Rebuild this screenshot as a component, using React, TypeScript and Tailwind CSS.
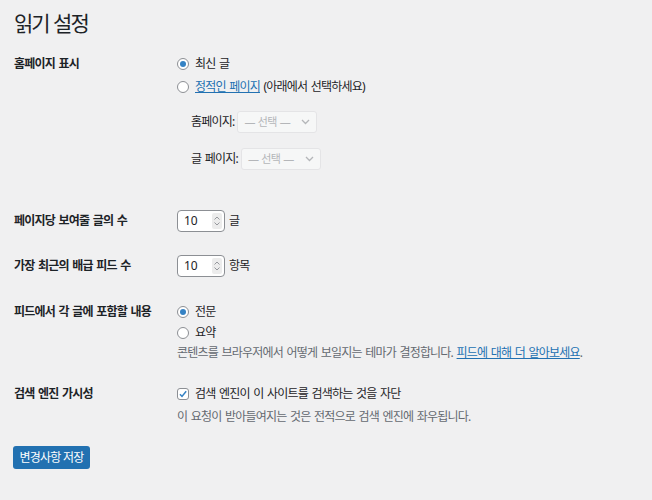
import React from "react";

function Radio({ checked, children }: { checked?: boolean; children: React.ReactNode }) {
  return (
    <label className="flex h-full items-center gap-[6px]">
      <span className="flex h-[12px] w-[12px] shrink-0 items-center justify-center rounded-full border border-[#8c8f94] bg-white">
        {checked && <span className="h-[6px] w-[6px] rounded-full bg-[#3582c4]" />}
      </span>
      <span>{children}</span>
    </label>
  );
}

function Select() {
  return (
    <div className="flex h-[22px] w-[80px] items-center justify-between rounded-[3px] border border-[#e4e4e6] bg-[#f6f7f7] pl-[6px] pr-[6px] text-[11px] text-[#b4b6b9]">
      <span>— 선택 —</span>
      <svg width="9" height="6" viewBox="0 0 9 6" fill="none">
        <path d="M1 1l3.5 3.5L8 1" stroke="#b4b6b9" strokeWidth="1.3" />
      </svg>
    </div>
  );
}

function NumberInput() {
  return (
    <div className="flex h-[22px] w-[48px] items-center justify-between rounded-[4px] border border-[#8c8f94] bg-white pl-[6px] pr-[2px] text-[12px] tracking-normal">
      <span>10</span>
      <span className="flex h-[16px] w-[10px] flex-col items-center justify-center gap-[2px] rounded-[2px] bg-[#ececec]">
        <svg width="6" height="4" viewBox="0 0 6 4" fill="none">
          <path d="M0.5 3.5L3 1l2.5 2.5" stroke="#8c8f94" strokeWidth="0.9" />
        </svg>
        <svg width="6" height="4" viewBox="0 0 6 4" fill="none">
          <path d="M0.5 0.5L3 3l2.5-2.5" stroke="#8c8f94" strokeWidth="0.9" />
        </svg>
      </span>
    </div>
  );
}

export default function App() {
  return (
    <div className="min-h-[500px] w-full bg-[#f0f0f1] font-['Noto_Sans','Noto_Sans_CJK_KR',sans-serif] text-[12px] tracking-[-0.8px] text-[#1d2327] [word-spacing:1.2px]">
      <div className="pl-[14px] pt-[9px]">
        <h1 className="h-[28px] text-[21px] font-normal leading-[28px] tracking-[-2px] text-[#1d2327] [word-spacing:1px]">읽기 설정</h1>

        <div className="mt-[15px] grid grid-cols-[163px_1fr]">
          <div className="h-[23px] font-bold leading-[23px]">홈페이지 표시</div>
          <div>
            <div className="h-[23px]">
              <Radio checked>최신 글</Radio>
            </div>
            <div className="h-[23px]">
              <Radio>
                <a className="text-[#2271b1] underline">정적인 페이지</a> (아래에서 선택하세요)
              </Radio>
            </div>
            <div className="ml-[14px] mt-[13px] flex h-[22px] items-center gap-[3px]">
              <span>홈페이지:</span>
              <Select />
            </div>
            <div className="ml-[14px] mt-[15px] flex h-[22px] items-center gap-[3px]">
              <span>글 페이지:</span>
              <Select />
            </div>
          </div>

          <div className="mt-[40px] h-[22px] font-bold leading-[22px]">페이지당 보여줄 글의 수</div>
          <div className="mt-[40px] flex h-[22px] items-center gap-[4px]">
            <NumberInput />
            <span>글</span>
          </div>

          <div className="mt-[23px] h-[22px] font-bold leading-[22px]">가장 최근의 배급 피드 수</div>
          <div className="mt-[23px] flex h-[22px] items-center gap-[4px]">
            <NumberInput />
            <span>항목</span>
          </div>

          <div className="mt-[24px] h-[21px] font-bold leading-[21px]">피드에서 각 글에 포함할 내용</div>
          <div className="mt-[24px]">
            <div className="h-[21px]">
              <Radio checked>전문</Radio>
            </div>
            <div className="h-[21px]">
              <Radio>요약</Radio>
            </div>
            <p className="h-[20px] leading-[20px] text-[#646970]">
              콘텐츠를 브라우저에서 어떻게 보일지는 테마가 결정합니다.{" "}
              <a className="text-[#2271b1] underline">피드에 대해 더 알아보세요</a>.
            </p>
          </div>

          <div className="mt-[20px] h-[21px] font-bold leading-[21px]">검색 엔진 가시성</div>
          <div className="mt-[20px]">
            <label className="flex h-[21px] items-center gap-[6px]">
              <span className="flex h-[12px] w-[12px] items-center justify-center rounded-[3px] border border-[#8c8f94] bg-white">
                <svg width="10" height="10" viewBox="0 0 10 10" fill="none">
                  <path d="M2 5.2l2 2.2L8.2 2.2" stroke="#3582c4" strokeWidth="1.5" />
                </svg>
              </span>
              <span>검색 엔진이 이 사이트를 검색하는 것을 자단</span>
            </label>
            <p className="mt-[3px] h-[20px] leading-[20px] text-[#646970]">
              이 요청이 받아들여지는 것은 전적으로 검색 엔진에 좌우됩니다.
            </p>
          </div>
        </div>

        <button className="mt-[19px] ml-[-1px] h-[23px] w-[77px] rounded-[3px] bg-[#2271b1] text-[12px] leading-[23px] text-white">
          변경사항 저장
        </button>
      </div>
    </div>
  );
}
